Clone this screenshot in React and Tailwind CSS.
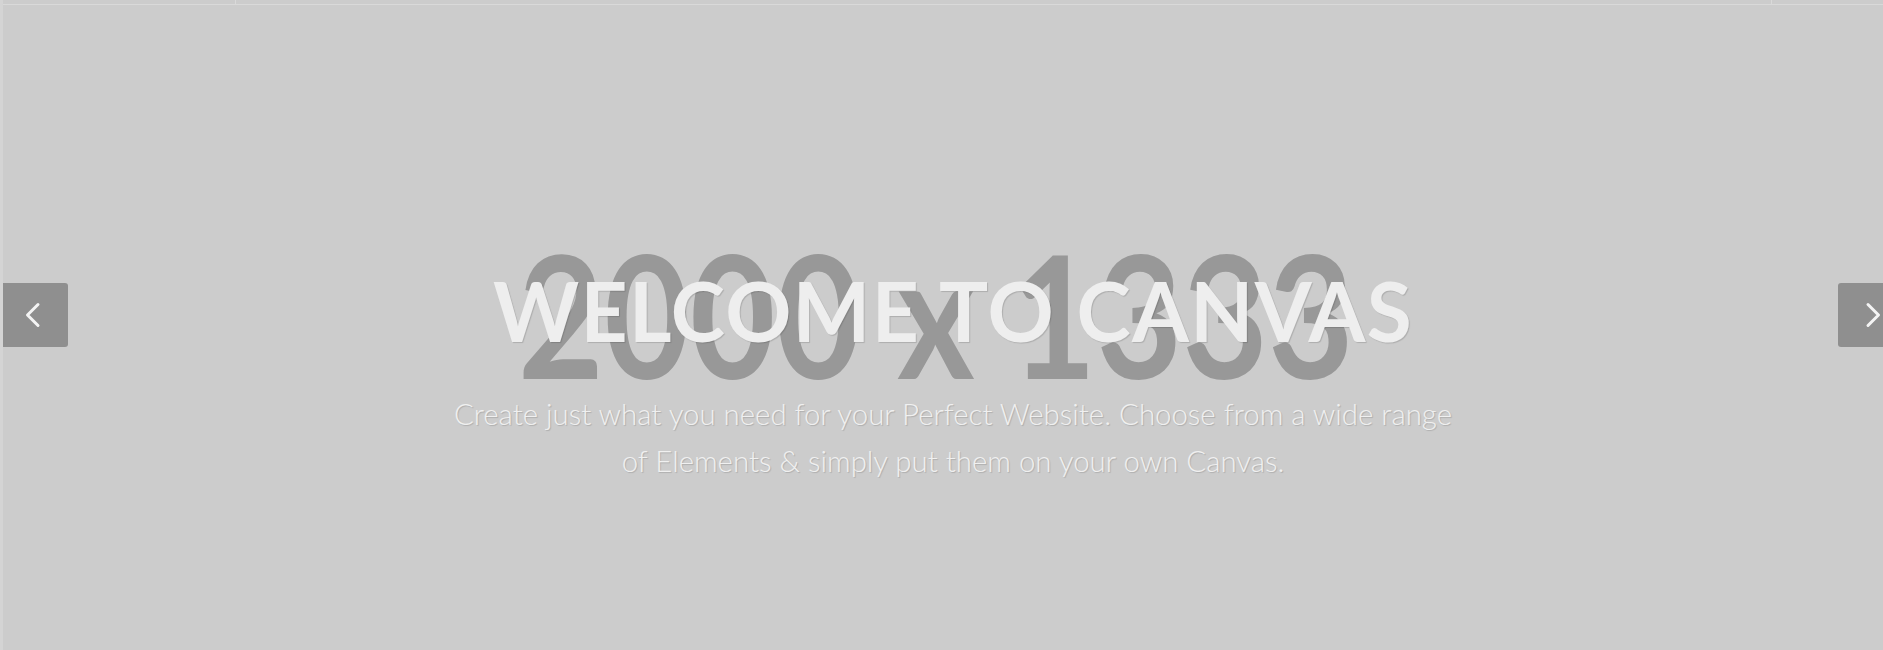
import { useState } from 'react'

const slides = [
  {
    title: 'Welcome to Canvas',
    text: 'Create just what you need for your Perfect Website. Choose from a wide range of Elements & simply put them on your own Canvas.',
  },
]

function Arrow({ dir = 'left', onClick }) {
  const isLeft = dir === 'left'
  return (
    <button
      onClick={onClick}
      className={`absolute top-[278px] flex h-[64px] w-[65px] items-center justify-center bg-[#8f8f8f] ${
        isLeft ? 'left-0 rounded-r-[3px] pr-[5px]' : 'right-0 rounded-l-[3px] pl-[5px]'
      }`}
    >
      <svg width="16" height="26" viewBox="0 0 16 26" fill="none">
        {isLeft ? (
          <path d="M13 2.5 2.5 13 13 23.5" stroke="#f4f4f4" strokeWidth="3" strokeLinecap="round" strokeLinejoin="round" />
        ) : (
          <path d="M3 2.5 13.5 13 3 23.5" stroke="#f4f4f4" strokeWidth="3" strokeLinecap="round" strokeLinejoin="round" />
        )}
      </svg>
    </button>
  )
}

export default function App() {
  const [current, setCurrent] = useState(0)
  const slide = slides[current]

  const prev = () => setCurrent((c) => (c - 1 + slides.length) % slides.length)
  const next = () => setCurrent((c) => (c + 1) % slides.length)

  return (
    <div className="flex h-[650px] w-full overflow-hidden bg-[#d4d4d4] font-['Lato',sans-serif]">
      <div className="ml-[3px] flex w-[1900px] shrink-0 flex-col">
        {/* Top strip */}
        <div className="flex h-[5px] shrink-0 border-b border-[#d9d9d9] bg-[#cccccc]">
          <div className="w-[233px] border-r border-[#d9d9d9]" />
          <div className="w-[1536px] border-r border-[#d9d9d9]" />
          <div className="flex-1" />
        </div>

        {/* Slide */}
        <div className="relative flex-1 bg-[#cccccc]">
          {/* Placeholder image */}
          <div className="absolute inset-0 flex justify-center pr-[34px] pt-[234px]">
            <div className="h-[148px] scale-y-[1.15] whitespace-pre text-[148px] font-bold leading-none text-[#989898]">
              2000 x 1333
            </div>
          </div>

          {/* Caption */}
          <div className="relative flex flex-col items-center pt-[264px] text-center">
            <h2 className="text-[82px] font-bold uppercase leading-none tracking-[1.35px] text-[#eeeeee] [text-shadow:1px_1px_1px_rgba(0,0,0,0.15)]">
              {slide.title}
            </h2>
            <p className="mt-[39px] max-w-[1012px] text-[29.4px] font-light leading-[47px] text-[#f0f0f0] [text-shadow:1px_1px_1px_rgba(0,0,0,0.15)]">
              {slide.text}
            </p>
          </div>

          <Arrow dir="left" onClick={prev} />
          <Arrow dir="right" onClick={next} />
        </div>
      </div>
    </div>
  )
}
